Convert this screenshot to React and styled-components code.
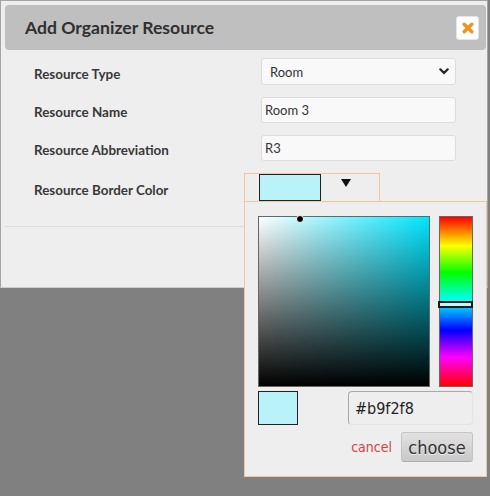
import React from "react";
import styled, { createGlobalStyle } from "styled-components";

const COLORS = {
  overlay: "#808080",
  panel: "#eeeeee",
  header: "#bfbfbf",
  text: "#333333",
  peach: "#f3c59a",
  picked: "#b9f2f8",
  hue: "#00e5ff",
  orange: "#f0921d",
};

const GlobalStyle = createGlobalStyle`
  html, body {
    margin: 0;
    padding: 0;
  }
  body {
    width: 490px;
    height: 496px;
    overflow: hidden;
    background: ${COLORS.overlay};
    font-family: Lato, "Open Sans", sans-serif;
    color: ${COLORS.text};
  }
`;

const Dialog = styled.div`
  box-sizing: border-box;
  width: 488px;
  height: 288px;
  padding: 4px 1px 0 4px;
  display: flex;
  flex-direction: column;
  background: ${COLORS.panel};
  border: 1px solid #a4a4a4;
  border-bottom-color: #cfcfcf;
`;

const Header = styled.div`
  height: 45px;
  flex-shrink: 0;
  display: flex;
  align-items: center;
  justify-content: space-between;
  padding: 0 7px 0 20px;
  background: ${COLORS.header};
  border-radius: 4px;
`;

const Title = styled.h2`
  margin: 0;
  font-size: 17.6px;
  font-weight: 700;
  color: #303030;
`;

const CloseButton = styled.button`
  width: 23px;
  height: 24px;
  padding: 0;
  display: flex;
  align-items: center;
  justify-content: center;
  background: #fff;
  border: 1px solid #e4e4e4;
  border-radius: 3px;
`;

const Form = styled.div`
  display: grid;
  grid-template-columns: 227px 195px;
  grid-template-rows: 27px 26px 26px 29px;
  row-gap: 12px;
  margin-top: 8px;
  padding-left: 29px;
`;

const Label = styled.label`
  display: flex;
  align-items: center;
  padding-top: 4px;
  font-size: 13.4px;
  font-weight: 700;
  color: #383838;
`;

const TextInput = styled.input`
  box-sizing: border-box;
  width: 100%;
  height: 26px;
  margin: 0;
  padding: 0 3px;
  font-family: Lato, "Open Sans", sans-serif;
  font-size: 13px;
  color: ${COLORS.text};
  background: #f9f9f9;
  border: 1px solid #dcdcdc;
  border-radius: 3px;
  outline: none;
`;

const SelectWrap = styled.div`
  position: relative;
`;

const Select = styled.select`
  box-sizing: border-box;
  width: 100%;
  height: 27px;
  margin: 0;
  padding: 0 8px;
  appearance: none;
  font-family: Lato, "Open Sans", sans-serif;
  font-size: 13px;
  color: ${COLORS.text};
  background: #f9f9f9;
  border: 1px solid #dcdcdc;
  border-radius: 3px;
  outline: none;
`;

const Chevron = styled.svg`
  position: absolute;
  right: 7px;
  top: 10px;
  pointer-events: none;
`;

const ColorCell = styled.div`
  display: flex;
  margin-left: -17px;
`;

const Trigger = styled.div`
  position: relative;
  box-sizing: border-box;
  width: 136px;
  height: 29px;
  padding-left: 14px;
  display: flex;
  background: ${COLORS.panel};
  border: 1px solid ${COLORS.peach};
`;

const Swatch = styled.div`
  box-sizing: border-box;
  width: ${(p) => p.w}px;
  height: ${(p) => p.h}px;
  background: ${(p) => p.color};
  border: 1px solid #222;
`;

const ArrowBox = styled.div`
  width: 50px;
  display: flex;
  justify-content: center;
  padding-top: 5px;
`;

const Arrow = styled.span`
  width: 0;
  height: 0;
  border-left: 5px solid transparent;
  border-right: 5px solid transparent;
  border-top: 8px solid #111;
`;

const Popover = styled.div`
  position: absolute;
  top: 100%;
  left: -1px;
  z-index: 10;
  box-sizing: border-box;
  width: 243px;
  padding: 14px 13px;
  display: flex;
  flex-direction: column;
  background: ${COLORS.panel};
  border: 1px solid ${COLORS.peach};
  font-family: "DejaVu Sans Condensed", "DejaVu Sans", sans-serif;
  font-stretch: condensed;
`;

const PickerArea = styled.div`
  display: flex;
  gap: 9px;
  height: 171px;
`;

const SatBox = styled.div`
  position: relative;
  box-sizing: border-box;
  width: 172px;
  height: 100%;
  border: 1px solid #666;
  background: linear-gradient(to top, #000, rgba(0, 0, 0, 0)),
    linear-gradient(to right, #fff, ${COLORS.hue});
`;

const SatDot = styled.span`
  position: absolute;
  width: 6px;
  height: 6px;
  border-radius: 50%;
  background: #000;
  border: 1px solid #fff;
  transform: translate(-50%, -50%);
`;

const HueBar = styled.div`
  position: relative;
  box-sizing: border-box;
  width: 34px;
  height: 100%;
  border: 1px solid #666;
  background: linear-gradient(
    to bottom,
    #f00 0%,
    #ff0 17%,
    #0f0 33%,
    #0ff 50%,
    #00f 67%,
    #f0f 83%,
    #f00 100%
  );
`;

const HueHandle = styled.span`
  position: absolute;
  left: -2px;
  right: -1px;
  box-sizing: border-box;
  height: 7px;
  background: #c6f5f9;
  border: 2px solid #1c1c1c;
`;

const InputRow = styled.div`
  display: flex;
  justify-content: space-between;
  margin-top: 4px;
  height: 34px;
`;

const HexInput = styled.input`
  box-sizing: border-box;
  width: 125px;
  height: 34px;
  margin: 0;
  padding: 0 6px;
  font-family: inherit;
  font-stretch: condensed;
  font-size: 16px;
  color: #222;
  background: transparent;
  border: 1px solid;
  border-color: #a9a9a9 #e4e4e4 #e4e4e4 #a9a9a9;
  border-radius: 4px;
  outline: none;
`;

const Actions = styled.div`
  display: flex;
  justify-content: flex-end;
  align-items: center;
  gap: 9px;
  margin-top: 7px;
  height: 30px;
`;

const CancelLink = styled.a`
  font-size: 14px;
  color: #d93f3f;
  text-decoration: none;
`;

const ChooseButton = styled.button`
  box-sizing: border-box;
  width: 72px;
  height: 30px;
  padding: 0;
  font-family: inherit;
  font-stretch: condensed;
  font-size: 18px;
  color: ${COLORS.text};
  text-shadow: 0 1px 0 #eee;
  background: linear-gradient(to bottom, #e2e2e2, #c8c8c8);
  border: 1px solid #c4c4c4;
  border-bottom-color: #b0b0b0;
  border-radius: 3px;
`;

const Separator = styled.div`
  height: 1px;
  margin-top: 24px;
  flex-shrink: 0;
  background: #dcdcdc;
`;

const Footer = styled.div`
  flex: 1;
`;

const CloseIcon = () => (
  <svg width="12" height="12" viewBox="0 0 12 12">
    <path
      d="M2.2 2.2 L9.8 9.8 M9.8 2.2 L2.2 9.8"
      stroke={COLORS.orange}
      strokeWidth="3.4"
      strokeLinecap="round"
    />
  </svg>
);

const ColorPicker = ({ color }) => (
  <Trigger>
    <Swatch w={62} h={27} color={color} />
    <ArrowBox>
      <Arrow />
    </ArrowBox>
    <Popover>
      <PickerArea>
        <SatBox>
          <SatDot style={{ left: 41, top: 2 }} />
        </SatBox>
        <HueBar>
          <HueHandle style={{ top: 84 }} />
        </HueBar>
      </PickerArea>
      <InputRow>
        <Swatch w={40} h={34} color={color} />
        <HexInput defaultValue={color} />
      </InputRow>
      <Actions>
        <CancelLink href="#">cancel</CancelLink>
        <ChooseButton>choose</ChooseButton>
      </Actions>
    </Popover>
  </Trigger>
);

export default function App() {
  return (
    <>
      <GlobalStyle />
      <Dialog>
        <Header>
          <Title>Add Organizer Resource</Title>
          <CloseButton aria-label="close">
            <CloseIcon />
          </CloseButton>
        </Header>
        <Form>
          <Label>Resource Type</Label>
          <SelectWrap>
            <Select defaultValue="room">
              <option value="room">Room</option>
            </Select>
            <Chevron width="10" height="7" viewBox="0 0 10 7">
              <path
                d="M1.3 1.3 L5 5 L8.7 1.3"
                fill="none"
                stroke="#222"
                strokeWidth="2.2"
                strokeLinecap="round"
                strokeLinejoin="round"
              />
            </Chevron>
          </SelectWrap>
          <Label>Resource Name</Label>
          <TextInput defaultValue="Room 3" />
          <Label>Resource Abbreviation</Label>
          <TextInput defaultValue="R3" />
          <Label>Resource Border Color</Label>
          <ColorCell>
            <ColorPicker color={COLORS.picked} />
          </ColorCell>
        </Form>
        <Separator />
        <Footer />
      </Dialog>
    </>
  );
}
